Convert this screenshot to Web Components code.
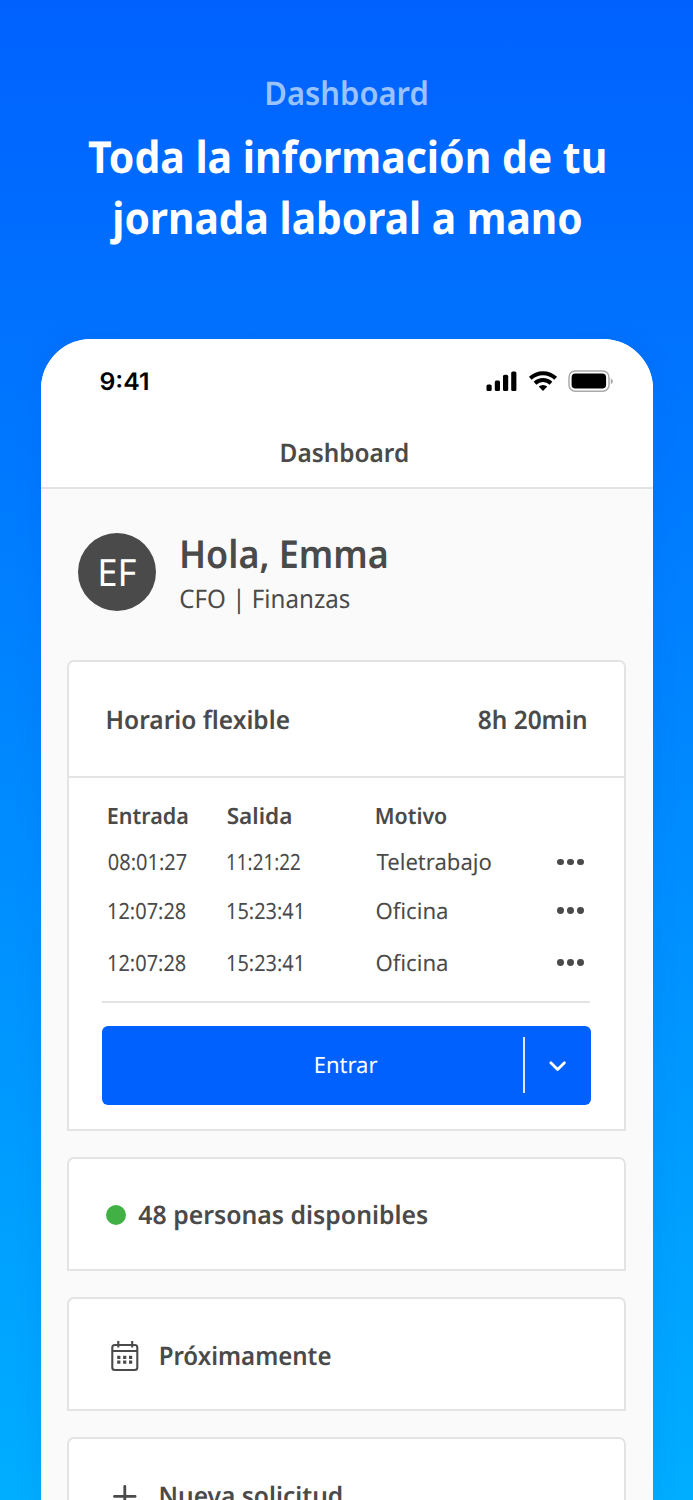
<!DOCTYPE html>
<html lang="es">
<head>
<meta charset="utf-8">
<title>Dashboard</title>
<style>
html,body{margin:0;height:1500px;overflow:hidden}
body{font-family:"Noto Sans","Open Sans",sans-serif;color:#4a4a4a;text-rendering:geometricPrecision}
</style>
</head>
<body>
<promo-page></promo-page>
<script>
const define=(name,html,init)=>customElements.define(name,class extends HTMLElement{
  constructor(){super();this.attachShadow({mode:'open'}).innerHTML=html;}
  connectedCallback(){if(init)init.call(this,this.shadowRoot);}
});

/* A line of text fitted into w pixels with a small inset; measured at 10x for sub-pixel precision. */
const ctx=document.createElement('canvas').getContext('2d');
const INSET=0.7;
define('fit-text',`<style>
:host{display:block;flex:none;white-space:pre}
span{display:inline-block;transform-origin:0 0}
</style><span><slot></slot></span>`,function(root){
  const cs=getComputedStyle(this),w=+this.getAttribute('w');
  ctx.font=`${cs.fontWeight} ${parseFloat(cs.fontSize)*10}px ${cs.fontFamily}`;
  const m=ctx.measureText(this.textContent);
  const left=m.actualBoundingBoxLeft/10,s=(w-2*INSET)/(left+m.actualBoundingBoxRight/10);
  this.style.width=w+'px';
  root.querySelector('span').style.transform=`translateX(${INSET+left*s}px) scaleX(${s})`;
});

define('promo-heading',`<style>
:host{display:flex;flex-direction:column;align-items:center;height:339px;box-sizing:border-box;padding-top:70px;color:#fff}
.eyebrow{font-size:32.5px;font-weight:600;line-height:46px;color:#99c2ff}
.title{font-size:44px;font-weight:700;line-height:61px}
.first{margin-top:10px}
.second{margin-right:2px}
</style>
<fit-text class="eyebrow" w="161.5">Dashboard</fit-text>
<fit-text class="title first" w="517">Toda la información de tu</fit-text>
<fit-text class="title second" w="472.5">jornada laboral a mano</fit-text>`);

define('status-bar',`<style>
:host{display:flex;justify-content:space-between;align-items:center;height:85px;padding:0 39.5px 0 59.5px;color:#000}
fit-text{font:600 24px/30px Inter,sans-serif;margin-top:1.5px}
svg{display:block}
</style>
<fit-text w="48.5">9:41</fit-text>
<svg width="127" height="24" viewBox="0 0 127 24">
<g><rect x="0.5" y="14.5" width="5.2" height="6.5" rx="1.5"/><rect x="8.8" y="10.5" width="5.2" height="10.5" rx="1.5"/><rect x="17" y="4.7" width="5.2" height="16.3" rx="1.5"/><rect x="25.2" y="1.5" width="5.2" height="19.5" rx="1.5"/></g>
<g fill="none" stroke="#000" stroke-width="4"><path d="M44.3 8.3a18.5 18.5 0 0 1 25.4 0"/><path d="M49 13.2a11.8 11.8 0 0 1 16 0"/></g>
<path d="M52.7 16.6a6.5 6.5 0 0 1 8.6 0L57 21z"/>
<rect x="83" y="1" width="40" height="20.2" rx="6.2" fill="none" stroke="#aaa" stroke-width="1.5"/>
<rect x="85.6" y="3.6" width="34.5" height="15" rx="3.8"/>
<path d="M124.8 8.4q2.2 1 2.2 2.9T124.8 14.2z" fill="#aaa"/>
</svg>`);

define('nav-title',`<style>
:host{display:flex;justify-content:center;height:63px;padding:0 5px 0 0;border-bottom:2px solid #e3e3e3;font-size:25.5px;font-weight:600;line-height:59px}
</style><fit-text w="127"><slot></slot></fit-text>`,function(r){
  const f=r.querySelector('fit-text');f.textContent=this.textContent;f.connectedCallback();
});

define('user-greeting',`<style>
:host{display:flex;gap:24px;height:170.5px;box-sizing:border-box;padding:43px 0 0 37.5px}
.avatar{width:78px;height:78px;margin-top:1px;border-radius:50%;background:#4a4a4a;color:#fff;display:flex;justify-content:center;font-size:37.5px;line-height:77px}
.avatar fit-text{margin-left:3px}
.name{font-size:38.5px;font-weight:600;line-height:42px;margin:1px 0 0 1px}
.role{font-size:25.5px;line-height:48px}
</style>
<div class="avatar"><fit-text w="36.5">EF</fit-text></div>
<div><fit-text class="name" w="206">Hola, Emma</fit-text><fit-text class="role" w="170">CFO | Finanzas</fit-text></div>`);

define('info-card',`<style>
:host{display:block;box-sizing:border-box;background:#fff;border:2px solid #e3e3e3;border-radius:7px 7px 0 0}
</style><slot></slot>`);

define('schedule-head',`<style>
:host{display:flex;justify-content:space-between;height:114.5px;padding:0 37.5px 0 38.5px;border-bottom:2px solid #e3e3e3;font-size:25.5px;font-weight:600;line-height:117px}
</style><fit-text w="182.5">Horario flexible</fit-text><fit-text w="108.5">8h 20min</fit-text>`);

define('more-dots',`<style>:host{display:flex;align-items:center;gap:2.9px}i{width:6.8px;height:6.8px;border-radius:50%;background:#4a4a4a}</style><i></i><i></i><i></i>`);

define('time-table',`<style>
:host{display:block;margin:0 34px 0 33px;height:222.5px;border-bottom:2px solid #e3e3e3;font-size:22.4px}
.row{display:grid;grid-template-columns:118.8px 149px 181.7px auto;justify-content:start;padding-left:6.3px;height:49px;line-height:49px}
.head{font-weight:600;height:60px;line-height:75px}
.first{height:48px;line-height:47px}
.last{height:55px;line-height:55px}
</style>
<div class="row head"><fit-text w="80">Entrada</fit-text><fit-text w="64.5">Salida</fit-text><fit-text w="71">Motivo</fit-text></div>
<div class="row first"><fit-text w="79">08:01:27</fit-text><fit-text w="73.5">11:21:22</fit-text><fit-text w="115.5">Teletrabajo</fit-text><more-dots></more-dots></div>
<div class="row"><fit-text w="78">12:07:28</fit-text><fit-text w="74.5">15:23:41</fit-text><fit-text w="71.5">Oficina</fit-text><more-dots></more-dots></div>
<div class="row last"><fit-text w="78">12:07:28</fit-text><fit-text w="74.5">15:23:41</fit-text><fit-text w="71.5">Oficina</fit-text><more-dots></more-dots></div>`);

define('split-button',`<style>
:host{display:flex;align-items:center;height:79px;margin:23px 33.5px 24px 33px;background:#0061ff;border-radius:6px;color:#fff}
.label{flex:1;display:flex;justify-content:center;font-size:22.4px;line-height:75px;padding-left:69px;margin-top:-1px}
.menu{width:66px;height:56px;border-left:2px solid #dbe8ff;display:flex;align-items:center;justify-content:center}
</style>
<div class="label"><fit-text w="63">Entrar</fit-text></div>
<div class="menu"><svg width="20" height="14" viewBox="0 0 20 14" fill="none" stroke="#fff" stroke-width="2.8" stroke-linecap="round" stroke-linejoin="round"><path d="M2.8 4.8 9.6 11.6 16.4 4.8"/></svg></div>`);

define('card-line',`<style>
:host{display:flex;align-items:center;height:110.2px;box-sizing:border-box;padding-top:3.5px;font-size:25.5px;font-weight:600;line-height:40px}
</style><slot></slot>`);

define('phone-screen',`<style>
:host{display:block;width:612px;height:1200px;margin-left:40.5px;background:#fafafa;border-radius:50px 50px 0 0;overflow:hidden;box-shadow:0 0 28px rgba(0,70,190,.12)}
.top{background:#fff}
.cards{display:grid;gap:26px;padding:0 26.5px 0 26.2px}
.dot{width:20px;height:20px;border-radius:50%;background:#41b146;margin:0 12.5px 0 37px}
.icon{margin:0 20.5px 0 42.8px;flex:none}
</style>
<div class="top"><status-bar></status-bar><nav-title>Dashboard</nav-title></div>
<user-greeting></user-greeting>
<div class="cards">
<info-card><schedule-head></schedule-head><time-table></time-table><split-button></split-button></info-card>
<info-card><card-line><span class="dot"></span><fit-text w="290">48 personas disponibles</fit-text></card-line></info-card>
<info-card><card-line><svg class="icon" width="28" height="32" viewBox="0 0 28 32" fill="none" stroke="#4a4a4a" stroke-width="2.1"><rect x="1.3" y="5" width="25" height="25" rx="2.5"/><path d="M1.3 11h25M7.3 1v6.5M21.2 1v6.5"/><path stroke-width="3.2" stroke-dasharray="3.2 2.7" d="M6.2 17.3h15.2M6.2 22.2h15.2"/></svg><fit-text w="171">Próximamente</fit-text></card-line></info-card>
<info-card><card-line><svg class="icon" width="28" height="28" viewBox="0 0 28 28" fill="none" stroke="#4a4a4a" stroke-width="2.8" stroke-linecap="round"><path d="M13.8 4.3v20M3.5 14.4h20.6"/></svg><fit-text w="182">Nueva solicitud</fit-text></card-line></info-card>
</div>`);

define('promo-page',`<style>
:host{display:block;height:1500px;overflow:hidden;background:linear-gradient(#0061ff,#00aeff)}
</style><promo-heading></promo-heading><phone-screen></phone-screen>`);
</script>
</body>
</html>
